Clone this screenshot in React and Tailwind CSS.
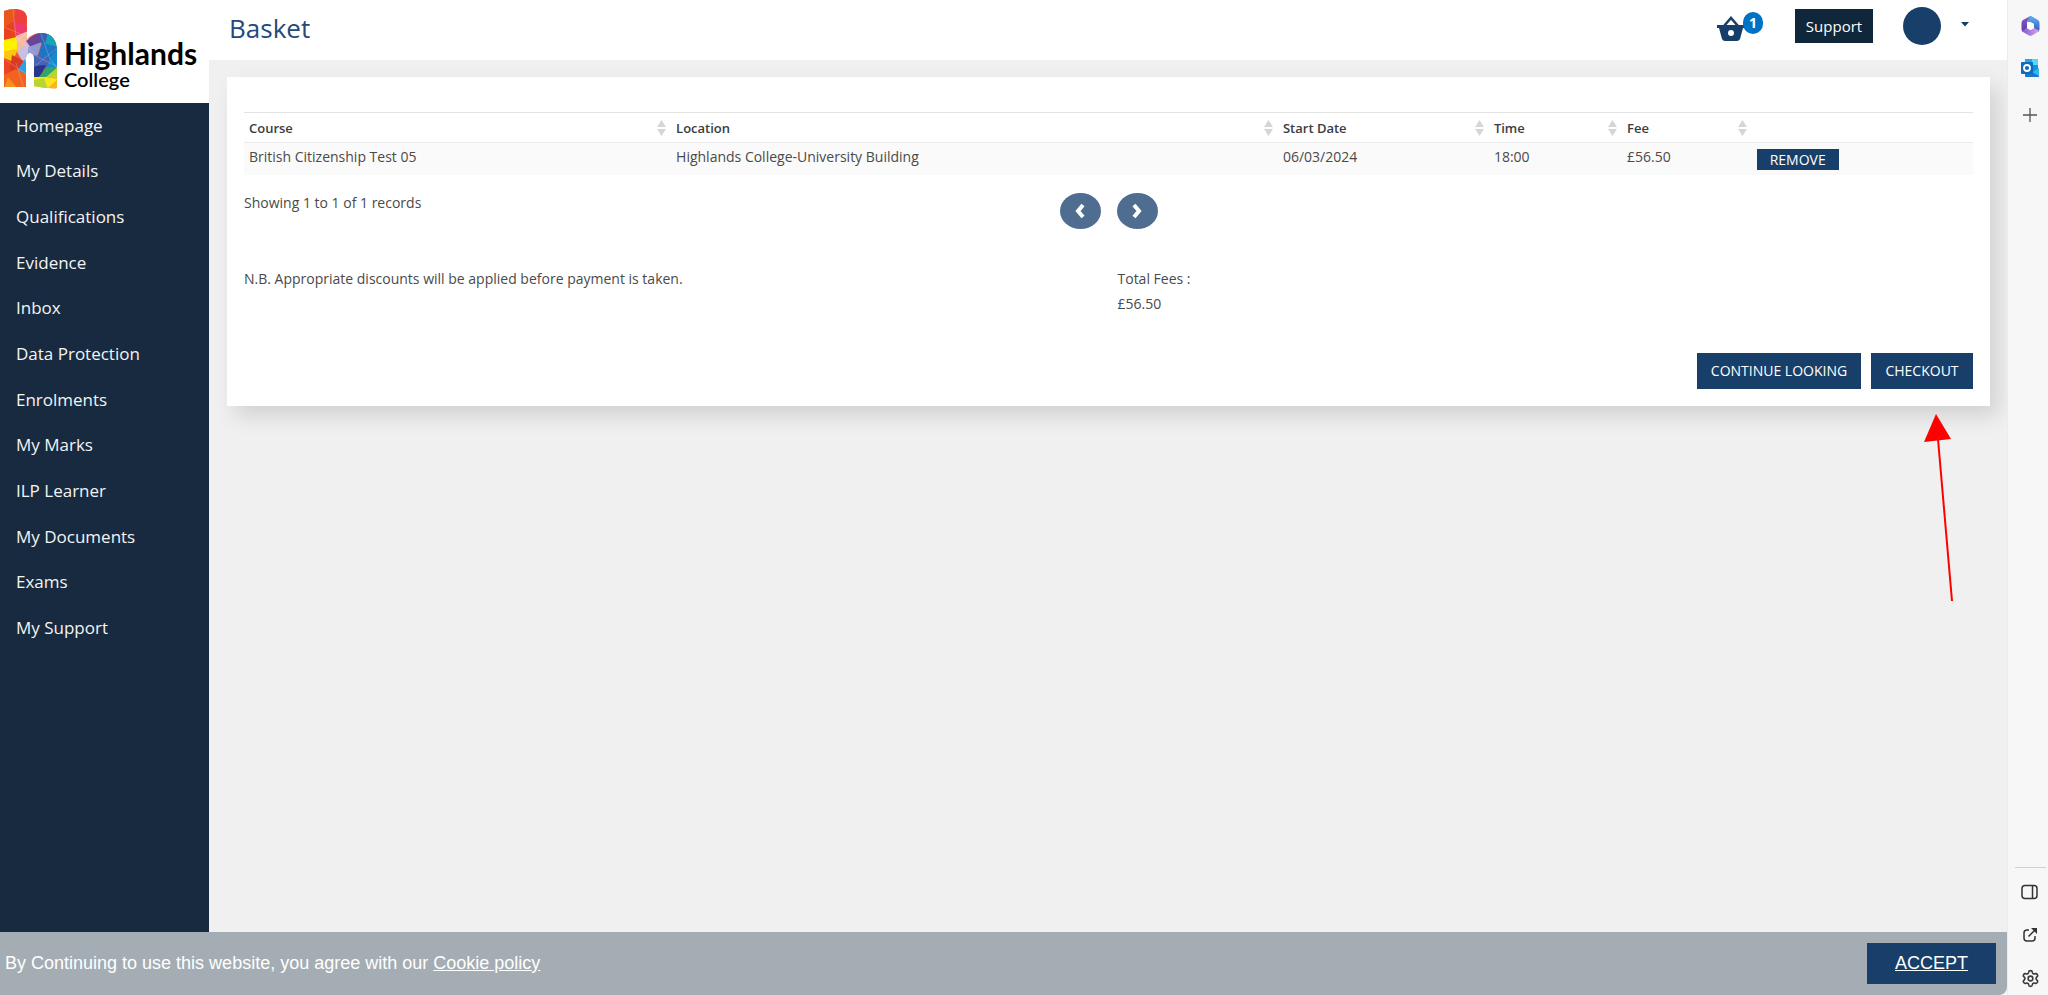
import { Settings } from "lucide-react";

const navItems = [
  "Homepage", "My Details", "Qualifications", "Evidence", "Inbox", "Data Protection",
  "Enrolments", "My Marks", "ILP Learner", "My Documents", "Exams", "My Support",
];

const columns = [
  { label: "Course", width: "w-[24.7%]", sortable: true },
  { label: "Location", width: "w-[35.1%]", sortable: true },
  { label: "Start Date", width: "w-[12.2%]", sortable: true },
  { label: "Time", width: "w-[7.7%]", sortable: true },
  { label: "Fee", width: "w-[7.5%]", sortable: true },
  { label: "", width: "w-[12.8%]", sortable: false },
];

function LogoMark() {
  return (
    <svg width="54" height="80" viewBox="0 0 54 80" aria-hidden="true">
      <defs>
        <clipPath id="logo-h">
          <path d="M0 2Q5 0 12 0C19 0 23 4 23 10V30Q29 24 37 24C48 24 53 31 53 42V79Q46 80 30 77V50C30 42 22 42 22 50V78H0Z" />
        </clipPath>
      </defs>
      <g clipPath="url(#logo-h)">
        <rect width="54" height="80" fill="#f0592b" />
        <path d="M0 0H14L8 14L0 20Z" fill="#e8581c" />
        <path d="M12 0L24 4L22 16L9 13Z" fill="#ef3f3c" />
        <path d="M9 13L22 16L24 28L12 26Z" fill="#ee3a6a" />
        <path d="M0 18L9 13L12 28L0 32Z" fill="#e8431f" />
        <path d="M0 31L13 28L14 42L0 45Z" fill="#fff000" />
        <path d="M0 42L14 40L8 54L0 50Z" fill="#fcc60e" />
        <path d="M12 27L24 22L26 42L14 44Z" fill="#f6b9a2" />
        <path d="M13 43L25 32L30 44L20 55Z" fill="#c7bfe4" />
        <path d="M0 49L12 54L8 66L0 68Z" fill="#ec4422" />
        <path d="M8 46L20 52L12 66L6 60Z" fill="#d93a24" />
        <path d="M11 65L21 50L24 66Z" fill="#2ba2e5" />
        <path d="M0 66L12 60L24 66L20 80H0Z" fill="#f26322" />
        <path d="M0 80L4 68L14 80Z" fill="#f8921e" />
        <path d="M22 32L36 22L38 34L28 40Z" fill="#6b4398" />
        <path d="M24 38L38 33L33 48L24 44Z" fill="#9298d0" />
        <path d="M35 22L46 24L42 36L37 34Z" fill="#3a5fb0" />
        <path d="M44 23L54 32V40L41 35Z" fill="#12a5b4" />
        <path d="M38 34L54 38L46 50L34 47Z" fill="#1d75c3" />
        <path d="M46 49L54 38V60L42 58Z" fill="#1689cf" />
        <path d="M30 46L46 49L42 60L30 58Z" fill="#4863b5" />
        <path d="M30 57L42 56L36 68L30 70Z" fill="#27368c" />
        <path d="M34 69L43 58L54 58L42 70Z" fill="#2fa66a" />
        <path d="M42 68L54 58V70Z" fill="#b8d433" />
        <path d="M30 68L42 68L54 70V80H30Z" fill="#f8e71c" />
        <path d="M30 71L40 69L44 80H30Z" fill="#b9d532" />
        <path d="M43 80L54 70V80Z" fill="#fbb41a" />
        <path d="M0 18L24 28M9 0L12 28L30 44M0 45L24 22M0 50L24 66M12 54L20 80M30 58L54 38M36 22L46 50L54 60M30 46L54 58" stroke="#fff" strokeOpacity=".3" strokeWidth=".7" fill="none" />
      </g>
    </svg>
  );
}

function SortIcon() {
  return (
    <svg width="9" height="16" viewBox="0 0 9 16" fill="#d6d6d6" aria-hidden="true">
      <path d="M4.500 0L9 7H0ZM0 9H9L4.500 16Z" />
    </svg>
  );
}

function Sidebar() {
  return (
    <aside className="flex w-[209px] shrink-0 flex-col bg-[#182a3f]">
      <a href="#home" className="flex h-[103px] shrink-0 items-start bg-white pl-1 pt-[9px] font-['Lato',sans-serif] text-black">
        <LogoMark />
        <span className="flex flex-col pl-[6px] pt-[28px]">
          <span className="text-[30px] font-bold leading-8">Highlands</span>
          <span className="text-[20px] font-semibold leading-5">College</span>
        </span>
      </a>
      <nav>
        <ul className="grid h-[548px] auto-rows-fr">
          {navItems.map((item) => (
            <li key={item} className="flex items-center">
              <a href="#nav" className="w-full pl-4 text-[17px] leading-6 text-[#f4f4f4]">{item}</a>
            </li>
          ))}
        </ul>
      </nav>
    </aside>
  );
}

function Header() {
  return (
    <header className="flex h-[60px] shrink-0 items-start justify-between bg-white pl-5 pr-[38px]">
      <h1 className="pt-2 text-[26px] leading-10 text-[#24497a]">Basket</h1>
      <div className="flex items-start pt-[7px]">
        <a href="#basket" aria-label="Basket" className="relative mr-[50px] mt-[9px] block">
          <svg width="28" height="26" viewBox="0 0 28 26" aria-hidden="true">
            <path d="M7 10L14 2L21 10" fill="none" stroke="#183f69" strokeWidth="2.500" />
            <path d="M0 9H28V12H26L23 23Q22 25 20 25H8Q6 25 5 23L2 12H0Z" fill="#183f69" />
            <circle cx="14" cy="17" r="3" fill="#fff" />
          </svg>
          <span className="absolute -top-1 left-[26px] flex h-[22px] w-5 items-center justify-center rounded-full bg-[#0072c6] text-[14px] font-bold leading-5 text-white">1</span>
        </a>
        <button type="button" className="mt-[2px] h-[34px] w-[78px] bg-[#10263b] text-[15px] leading-5 text-white">Support</button>
        <button type="button" aria-label="Account menu" className="ml-[30px] flex items-center gap-5">
          <span className="size-[38px] rounded-full bg-[#183f69]" />
          <svg width="8" height="5" viewBox="0 0 8 5" className="mb-1" aria-hidden="true">
            <path d="M0 0H8L4 4.500Z" fill="#183f69" />
          </svg>
        </button>
      </div>
    </header>
  );
}

function PagerButton({ label, d }) {
  return (
    <button type="button" aria-label={label} className="flex h-9 w-[41px] items-center justify-center rounded-[50%] bg-[#4f6d91]">
      <svg width="12" height="16" viewBox="0 0 12 16" fill="none" stroke="#fff" strokeWidth="4" aria-hidden="true">
        <path d={d} />
      </svg>
    </button>
  );
}

function PointerArrow() {
  return (
    <svg width="30" height="190" viewBox="0 0 30 190" className="absolute right-9 top-full mt-[7px]" aria-hidden="true">
      <path d="M12 1L27 26L0 29Z" fill="#f00" />
      <path d="M14 26L28 188" stroke="#f00" strokeWidth="2" />
    </svg>
  );
}

function BasketCard() {
  return (
    <section className="relative ml-[18px] mr-[17px] mt-[17px] flex flex-col bg-white px-[17px] pb-[17px] pt-[35px] text-[14px] leading-5 text-[#4a4a4a] shadow-[8px_10px_20px_0_rgba(0,0,0,0.13)]">
      <table className="w-full table-fixed border-t border-[#e4e4e4] text-left">
        <thead>
          <tr className="h-[30px] border-b border-[#ebebeb]">
            {columns.map((c, i) => (
              <th key={i} scope="col" className={`${c.width} px-[5px] py-0 text-[13px] font-semibold leading-5 text-[#383c44]`}>
                <span className="flex items-center justify-between">
                  {c.label}
                  {c.sortable && <SortIcon />}
                </span>
              </th>
            ))}
          </tr>
        </thead>
        <tbody>
          <tr className="h-8 bg-[#fafafa] align-top">
            <td className="px-[5px] pt-1">British Citizenship Test 05</td>
            <td className="px-[5px] pt-1">Highlands College-University Building</td>
            <td className="px-[5px] pt-1">06/03/2024</td>
            <td className="px-[5px] pt-1">18:00</td>
            <td className="px-[5px] pt-1">£56.50</td>
            <td className="px-[5px] pt-[6px]">
              <button type="button" className="block h-[21px] w-[82px] bg-[#183f69] text-[14px] leading-5 text-white">REMOVE</button>
            </td>
          </tr>
        </tbody>
      </table>
      <div className="grid grid-cols-[1fr_auto_1fr] pt-[18px]">
        <p>Showing 1 to 1 of 1 records</p>
        <div className="flex gap-4">
          <PagerButton label="Previous page" d="M9 2L4 8L9 14" />
          <PagerButton label="Next page" d="M3 2L8 8L3 14" />
        </div>
      </div>
      <div className="grid grid-cols-2 gap-x-[18px] pt-[37px] leading-[25px]">
        <p>N.B. Appropriate discounts will be applied before payment is taken.</p>
        <div>
          <p>Total Fees :</p>
          <p>£56.50</p>
        </div>
      </div>
      <div className="flex justify-end gap-[10px] pt-[37px] text-[14px] text-white">
        <button type="button" className="h-9 w-[164px] bg-[#183f69]">CONTINUE LOOKING</button>
        <button type="button" className="h-9 w-[102px] bg-[#183f69]">CHECKOUT</button>
      </div>
      <PointerArrow />
    </section>
  );
}

function CookieBanner() {
  return (
    <footer className="flex h-[63px] shrink-0 items-center justify-between rounded-br-lg bg-[#a4adb4] pl-[5px] pr-[11px] font-['Liberation_Sans',sans-serif] text-[18px] text-white">
      <p>
        By Continuing to use this website, you agree with our{" "}
        <a href="#cookies" className="underline">Cookie policy</a>
      </p>
      <button type="button" className="h-[41px] w-[129px] bg-[#183f69] underline">ACCEPT</button>
    </footer>
  );
}

function BrowserRail() {
  return (
    <aside className="flex w-[41px] shrink-0 flex-col items-center justify-between border-l border-[#ececec] bg-[#f7f7f7] pb-[7px] pl-1 pt-4">
      <div className="flex flex-col items-center">
        <button type="button" aria-label="Microsoft 365">
          <svg width="19" height="20" viewBox="0 0 19 20">
            <defs>
              <linearGradient id="m-a" x1="0" y1="0" x2="0" y2="1"><stop stopColor="#8a5cc8" /><stop offset="1" stopColor="#5a3aa8" /></linearGradient>
              <linearGradient id="m-b" x1="0" y1="0" x2="0" y2="1"><stop stopColor="#5ab4ee" /><stop offset="1" stopColor="#3a52c4" /></linearGradient>
              <linearGradient id="m-c" x1="0" y1="0" x2="1" y2="0"><stop stopColor="#7b5ed0" /><stop offset="1" stopColor="#dfa0ea" /></linearGradient>
            </defs>
            <path d="M9.500 0L2 4Q.5 5 .5 7V13Q.5 15 2 16L6 14V6L13 2Z" fill="url(#m-a)" />
            <path d="M9 .5Q10 0 11 .5L17 4Q18.500 5 18.500 7V13Q18.500 15 17 16L13 14V8L6 5Z" fill="url(#m-b)" />
            <path d="M1 15L6 12L9.500 14L13 12L18 14.500Q17.500 16 16 16.500L11 19.500Q9.500 20 8 19.500L2 16Z" fill="url(#m-c)" />
            <path d="M9.500 6L13 8V12L9.500 14L6 12V8Z" fill="#fff" />
          </svg>
        </button>
        <button type="button" aria-label="Outlook" className="mt-[23px]">
          <svg width="18" height="18" viewBox="0 0 18 18">
            <path d="M4 0H17V16H4Z" fill="#1490df" />
            <path d="M11 0H17V6H11Z" fill="#50d9ff" />
            <path d="M4 0H11V6H4Z" fill="#28a8ea" />
            <path d="M4 18L18 9V17Q18 18 17 18Z" fill="#35b8f1" />
            <path d="M4 9L18 17Q18 18 17 18H5Q4 18 4 17Z" fill="#1a78cc" />
            <rect y="3" width="12" height="12" rx="1" fill="#0f6cbd" />
            <circle cx="6" cy="9" r="3" fill="none" stroke="#fff" strokeWidth="1.800" />
          </svg>
        </button>
        <button type="button" aria-label="Add" className="mt-[31px]">
          <svg width="14" height="14" viewBox="0 0 14 14" stroke="#555" strokeWidth="1.300"><path d="M7 0V14M0 7H14" /></svg>
        </button>
      </div>
      <div className="flex w-full flex-col items-center">
        <hr className="w-[31px] border-[#cfcfcf]" />
        <button type="button" aria-label="Toggle side panel" className="mt-4">
          <svg width="18" height="16" viewBox="0 0 18 16" fill="none" stroke="#333" strokeWidth="1.500"><rect x="1" y="1.500" width="15" height="13" rx="3" /><path d="M11.500 1.500V14.500" /></svg>
        </button>
        <button type="button" aria-label="Open in new window" className="mt-[27px]">
          <svg width="16" height="16" viewBox="0 0 16 16" fill="none" stroke="#333" strokeWidth="1.500"><path d="M7 3H5Q2 3 2 6V11Q2 14 5 14H10Q13 14 13 11V9M6.500 9.500L14 2" /><path d="M9 1H15V7Z" fill="#333" stroke="none" /></svg>
        </button>
        <button type="button" aria-label="Settings" className="mt-[26px]">
          <Settings size={19} color="#3a3a3a" strokeWidth={2} />
        </button>
      </div>
    </aside>
  );
}

export default function App() {
  return (
    <div className="flex min-h-screen bg-[#f7f7f7] font-['Open_Sans',sans-serif]">
      <div className="flex min-w-0 flex-1 flex-col">
        <div className="flex flex-1">
          <Sidebar />
          <main className="flex min-w-0 flex-1 flex-col overflow-hidden bg-[#f0f0f0]">
            <Header />
            <BasketCard />
          </main>
        </div>
        <CookieBanner />
      </div>
      <BrowserRail />
    </div>
  );
}
